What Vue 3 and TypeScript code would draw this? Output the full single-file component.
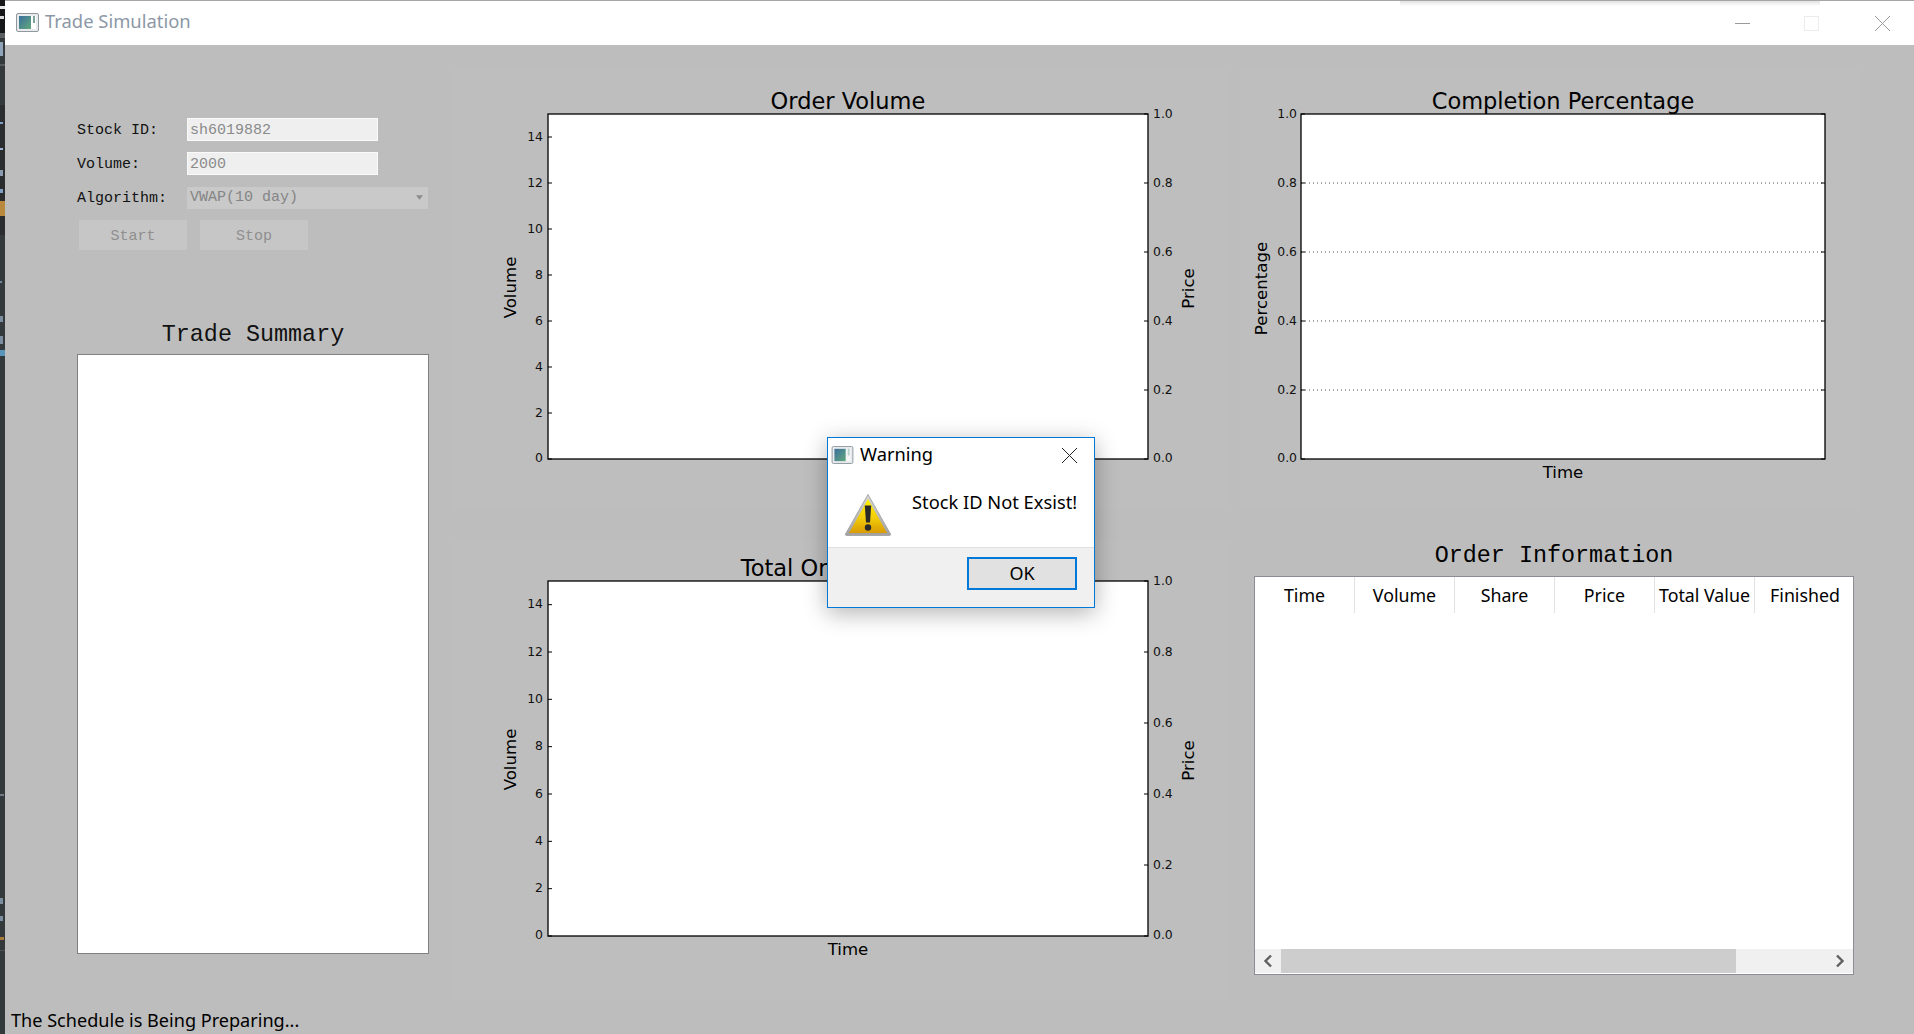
<script setup lang="ts">
interface Chart {
  id: string
  title: string
  titleY: number
  width: number
  height: number
  px: number
  py: number
  pw: number
  ph: number
  timeY: number
}

interface Mark {
  top: number
  height: number
  width: number
  color: string
}

const volumeTicks = [0, 2, 4, 6, 8, 10, 12, 14]
const unitTicks = ['0.0', '0.2', '0.4', '0.6', '0.8', '1.0']

const orderVolume: Chart = {
  id: 'order', title: 'Order Volume', titleY: 39, width: 778, height: 440,
  px: 96, py: 44, pw: 600, ph: 345, timeY: 408,
}
const totalVolume: Chart = {
  id: 'total', title: 'Total Order Volume', titleY: 36, width: 778, height: 460,
  px: 96, py: 41, pw: 600, ph: 355, timeY: 415,
}
const completion: Chart = {
  id: 'completion', title: 'Completion Percentage', titleY: 39, width: 620, height: 440,
  px: 61, py: 44, pw: 524, ph: 345, timeY: 408,
}

const volY = (c: Chart, v: number) => c.py + c.ph - (v / 15) * c.ph
const unitY = (c: Chart, i: number) => c.py + c.ph - (i / 5) * c.ph

const columns = ['Time', 'Volume', 'Share', 'Price', 'Total Value', 'Finished']

const stripMarks: Mark[] = [
  { top: 0, height: 33, width: 5, color: '#151719' },
  { top: 6, height: 3, width: 5, color: '#e6e6e6' },
  { top: 16, height: 3, width: 4, color: '#d8d8d8' },
  { top: 33, height: 5, width: 5, color: '#5d6063' },
  { top: 42, height: 14, width: 3, color: '#8fa4b8' },
  { top: 64, height: 2, width: 5, color: '#55595c' },
  { top: 105, height: 130, width: 5, color: '#2a2c2e' },
  { top: 122, height: 2, width: 3, color: '#7fa0c4' },
  { top: 148, height: 2, width: 3, color: '#9db4d8' },
  { top: 170, height: 6, width: 3, color: '#8c9bb0' },
  { top: 189, height: 4, width: 3, color: '#7fa0c4' },
  { top: 201, height: 15, width: 5, color: '#b98a3e' },
  { top: 281, height: 2, width: 2, color: '#6d88a3' },
  { top: 316, height: 6, width: 3, color: '#7d8da0' },
  { top: 336, height: 8, width: 3, color: '#7d8da0' },
  { top: 350, height: 6, width: 5, color: '#5b94bb' },
  { top: 794, height: 2, width: 4, color: '#6f7a84' },
  { top: 898, height: 6, width: 3, color: '#7d8da0' },
  { top: 916, height: 5, width: 3, color: '#7d8da0' },
  { top: 937, height: 3, width: 4, color: '#a8793a' },
  { top: 950, height: 1, width: 5, color: '#4d5154' },
]
</script>

<template>
  <div class="desktop">
    <div class="strip">
      <span
        v-for="m in stripMarks"
        :key="m.top"
        class="strip-mark"
        :style="{ top: m.top + 'px', height: m.height + 'px', width: m.width + 'px', background: m.color }"
      ></span>
    </div>
    <div class="window">
      <header class="titlebar">
        <svg class="app-icon" viewBox="0 0 23 19" width="23" height="19">
          <rect x="0.5" y="0.5" width="22" height="18" rx="1.5" fill="#e8eaec" stroke="#8d989f" />
          <rect x="3" y="3" width="12" height="13" fill="url(#appGrad)" />
          <rect x="15" y="3" width="5" height="13" fill="#fff" />
          <rect x="17" y="3" width="2" height="7" fill="#7ba39a" />
          <defs>
            <linearGradient id="appGrad" x1="0" y1="0" x2="1" y2="1">
              <stop offset="0" stop-color="#3a6f9c" />
              <stop offset="1" stop-color="#62a97c" />
            </linearGradient>
          </defs>
        </svg>
        <span class="window-title">Trade Simulation</span>
        <div class="window-controls">
          <svg viewBox="0 0 15 15" width="15" height="15" class="ctl-min"><path d="M0 7.5H15" stroke="#9a9a9a" /></svg>
          <svg viewBox="0 0 15 15" width="15" height="15" class="ctl-max"><rect x="0.5" y="0.5" width="14" height="14" fill="none" stroke="#ececec" /></svg>
          <svg viewBox="0 0 15 15" width="15" height="15" class="ctl-close"><path d="M0 0L15 15M15 0L0 15" stroke="#9a9a9a" /></svg>
        </div>
        <span class="top-shadow"></span>
      </header>

      <main class="content">
        <section class="left">
          <div class="form-row">
            <label class="field-label">Stock ID:</label>
            <div class="field-value">sh6019882</div>
          </div>
          <div class="form-row">
            <label class="field-label">Volume:</label>
            <div class="field-value">2000</div>
          </div>
          <div class="form-row">
            <label class="field-label">Algorithm:</label>
            <div class="combo">
              <span>VWAP(10 day)</span>
              <svg viewBox="0 0 8 5" width="7" height="5"><path d="M0 0H8L4 5Z" fill="#8c8c8c" /></svg>
            </div>
          </div>
          <div class="actions">
            <button class="action" disabled>Start</button>
            <button class="action" disabled>Stop</button>
          </div>
          <h2 class="mono-title summary-title">Trade Summary</h2>
          <div class="summary-box"></div>
        </section>

        <section class="middle">
          <svg
            v-for="c in [orderVolume, totalVolume]"
            :key="c.id"
            class="chart"
            :width="c.width"
            :height="c.height"
            :viewBox="`0 0 ${c.width} ${c.height}`"
          >
            <text class="c-title" :x="c.px + c.pw / 2" :y="c.titleY" text-anchor="middle">{{ c.title }}</text>
            <rect :x="c.px" :y="c.py" :width="c.pw" :height="c.ph" fill="#fff" stroke="#000" stroke-width="1.3" />
            <g v-for="v in volumeTicks" :key="v">
              <path :d="`M${c.px} ${volY(c, v)}h4`" stroke="#000" />
              <text class="c-tick" :x="c.px - 5" :y="volY(c, v) + (v === 0 ? 3 : 3.5)" text-anchor="end">{{ v }}</text>
            </g>
            <g v-for="(t, i) in unitTicks" :key="t">
              <path :d="`M${c.px + c.pw} ${unitY(c, i)}h-4`" stroke="#000" />
              <text class="c-tick" :x="c.px + c.pw + 5" :y="unitY(c, i) + (i === 0 ? 3 : 3.5)">{{ t }}</text>
            </g>
            <text class="c-label" :transform="`translate(64 ${c.py + c.ph / 2 + 1}) rotate(-90)`" text-anchor="middle">Volume</text>
            <text class="c-label" :transform="`translate(742 ${c.py + c.ph / 2 + 2}) rotate(-90)`" text-anchor="middle">Price</text>
            <text class="c-label" :x="c.px + c.pw / 2" :y="c.timeY" text-anchor="middle">Time</text>
          </svg>
        </section>

        <section class="right">
          <svg
            class="chart"
            :width="completion.width"
            :height="completion.height"
            :viewBox="`0 0 ${completion.width} ${completion.height}`"
          >
            <text class="c-title" :x="completion.px + completion.pw / 2" :y="completion.titleY" text-anchor="middle">{{ completion.title }}</text>
            <rect :x="completion.px" :y="completion.py" :width="completion.pw" :height="completion.ph" fill="#fff" />
            <g v-for="(t, i) in unitTicks" :key="t">
              <path
                v-if="i > 0 && i < 5"
                :d="`M${completion.px} ${unitY(completion, i)}h${completion.pw}`"
                stroke="#555"
                stroke-dasharray="1 3"
              />
              <path :d="`M${completion.px} ${unitY(completion, i)}h4M${completion.px + completion.pw} ${unitY(completion, i)}h-4`" stroke="#000" />
              <text class="c-tick" :x="completion.px - 4" :y="unitY(completion, i) + (i === 0 ? 3 : 3.5)" text-anchor="end">{{ t }}</text>
            </g>
            <rect :x="completion.px" :y="completion.py" :width="completion.pw" :height="completion.ph" fill="none" stroke="#000" stroke-width="1.3" />
            <text class="c-label" :transform="`translate(27 ${completion.py + completion.ph / 2 + 2}) rotate(-90)`" text-anchor="middle">Percentage</text>
            <text class="c-label" :x="completion.px + completion.pw / 2" :y="completion.timeY" text-anchor="middle">Time</text>
          </svg>

          <h2 class="mono-title order-title">Order Information</h2>
          <div class="table">
            <div class="thead">
              <div v-for="col in columns" :key="col" class="th">{{ col }}</div>
            </div>
            <div class="tbody"></div>
            <div class="hscroll">
              <button class="sb-btn" disabled>
                <svg viewBox="0 0 10 14" width="10" height="14"><path d="M8 1.5L2.5 7L8 12.5" fill="none" stroke="#606060" stroke-width="2.4" /></svg>
              </button>
              <div class="sb-thumb"></div>
              <div class="sb-track"></div>
              <button class="sb-btn" disabled>
                <svg viewBox="0 0 10 14" width="10" height="14"><path d="M2 1.5L7.5 7L2 12.5" fill="none" stroke="#606060" stroke-width="2.4" /></svg>
              </button>
            </div>
          </div>
        </section>
      </main>

      <footer class="status">The Schedule is Being Preparing...</footer>
    </div>

    <div class="dialog">
      <div class="dlg-title">
        <svg viewBox="0 0 23 19" width="23" height="18" class="dlg-app">
          <rect x="0.5" y="0.5" width="22" height="18" rx="1.5" fill="#e8eaec" stroke="#8d989f" />
          <rect x="3" y="3" width="12" height="13" fill="url(#dlgGrad)" />
          <rect x="15" y="3" width="5" height="13" fill="#f6f6f6" />
          <rect x="17" y="3" width="2" height="7" fill="#b9cfc9" />
          <defs>
            <linearGradient id="dlgGrad" x1="0" y1="0" x2="1" y2="1">
              <stop offset="0" stop-color="#3a6f9c" />
              <stop offset="1" stop-color="#62a97c" />
            </linearGradient>
          </defs>
        </svg>
        <span class="dlg-name">Warning</span>
        <svg class="dlg-close" viewBox="0 0 15 15" width="15" height="15"><path d="M0 0L15 15M15 0L0 15" stroke="#222" /></svg>
      </div>
      <div class="dlg-body">
        <svg class="warn" viewBox="0 0 48 44" width="48" height="44">
          <defs>
            <linearGradient id="warnFill" x1="0" y1="0" x2="0" y2="1">
              <stop offset="0" stop-color="#fff200" />
              <stop offset="0.55" stop-color="#f2ce0a" />
              <stop offset="1" stop-color="#d99a04" />
            </linearGradient>
            <linearGradient id="warnEdge" x1="0" y1="0" x2="0" y2="1">
              <stop offset="0" stop-color="#d8d8d8" />
              <stop offset="1" stop-color="#a0a0a0" />
            </linearGradient>
          </defs>
          <path d="M24 1.5L46.5 41Q47 42.5 45 42.5H3Q1 42.5 1.5 41Z" fill="url(#warnEdge)" stroke="#a8a8a8" stroke-linejoin="round" />
          <path d="M24 6L43 40H5Z" fill="url(#warnFill)" />
          <path d="M20.8 12.5H27.2L26 29.5H22Z" fill="#2a2a2a" />
          <circle cx="24" cy="34.5" r="3.2" fill="#2a2a2a" />
        </svg>
        <span class="dlg-text">Stock ID Not Exsist!</span>
      </div>
      <div class="dlg-foot">
        <button class="ok">OK</button>
      </div>
    </div>
  </div>
</template>

<style>
html,
body {
  margin: 0;
  overflow: hidden;
  background: #34393c;
}
</style>

<style scoped>
.desktop {
  position: relative;
  display: flex;
  width: 1914px;
  height: 1034px;
  overflow: hidden;
  font-family: "Noto Sans", sans-serif;
  color: #000;
}

.strip {
  position: relative;
  flex: 0 0 5px;
  background: #34393c;
}
.strip-mark {
  position: absolute;
  left: 0;
}

.window {
  flex: 1;
  display: flex;
  flex-direction: column;
  background: #bdbdbd;
  min-width: 0;
}

.titlebar {
  position: relative;
  flex: 0 0 45px;
  box-sizing: border-box;
  display: flex;
  align-items: center;
  padding: 0 0 2px 11px;
  background: #fff;
  border-top: 1px solid #a6a6a6;
}
.app-icon {
  margin-right: 6px;
}
.window-title {
  font-size: 18.4px;
  line-height: 24px;
  margin-top: -2px;
  color: #8c98a6;
}
.window-controls {
  margin-left: auto;
  display: flex;
  align-items: center;
  padding-top: 2px;
}
.ctl-min {
  margin-right: 54px;
}
.ctl-max {
  margin-right: 56px;
}
.ctl-close {
  margin-right: 24px;
}
.top-shadow {
  position: absolute;
  left: 1395px;
  top: 0;
  width: 420px;
  height: 5px;
  background: linear-gradient(#e2e2e2, #fff);
}

.content {
  flex: 0 0 955px;
  display: grid;
  grid-template-columns: 352px 778px 620px;
  column-gap: 23px;
  padding: 25px 0 0 72px;
  box-sizing: border-box;
}
.right {
  margin-left: -13px;
  display: flex;
  flex-direction: column;
}
.middle {
  display: flex;
  flex-direction: column;
  gap: 30px;
}
.chart {
  display: block;
  background: #bebebe;
}
.c-title {
  font: 22.5px "DejaVu Sans", sans-serif;
  fill: #000;
}
.c-tick {
  font: 12.4px "DejaVu Sans", sans-serif;
  fill: #111;
}
.c-label {
  font: 16.6px "DejaVu Sans", sans-serif;
  fill: #000;
}

.left {
  padding-top: 48px;
  display: flex;
  flex-direction: column;
  color: #111;
}
.form-row {
  display: flex;
  align-items: center;
  height: 23px;
  margin-bottom: 11px;
}
.field-label {
  flex: 0 0 110px;
  padding-top: 2px;
  font: 15px "Liberation Mono", monospace;
}
.field-value {
  box-sizing: border-box;
  width: 191px;
  height: 23px;
  padding: 1px 0 0 2px;
  background: #efefef;
  border: 1px solid #fafafa;
  color: #8a8a8a;
  font: 15px/21px "Liberation Mono", monospace;
}
.combo {
  box-sizing: border-box;
  width: 241px;
  height: 22px;
  padding: 0 5px 0 3px;
  display: flex;
  align-items: center;
  justify-content: space-between;
  background: #c9c9c9;
  color: #858585;
  font: 15px "Liberation Mono", monospace;
}
.actions {
  display: flex;
  gap: 13px;
  padding-left: 2px;
}
.action {
  width: 108px;
  height: 30px;
  padding: 2px 0 0;
  border: 0;
  background: #c6c6c6;
  color: #8f8f8f;
  font: 15px "Liberation Mono", monospace;
}
.mono-title {
  margin: 0;
  font: 400 23.4px/28px "Liberation Mono", monospace;
  text-align: center;
}
.summary-title {
  margin-top: 71px;
  margin-bottom: 5px;
}
.summary-box {
  box-sizing: border-box;
  height: 600px;
  background: #fff;
  border: 1px solid #808080;
}

.order-title {
  margin: 32px 0 0 14px;
  width: 600px;
  height: 34px;
}
.table {
  margin-left: 14px;
  box-sizing: border-box;
  width: 600px;
  height: 399px;
  display: flex;
  flex-direction: column;
  background: #fff;
  border: 1px solid #8c8c94;
}
.thead {
  display: grid;
  grid-template-columns: repeat(6, 100px);
  height: 36px;
}
.th {
  box-sizing: border-box;
  border-right: 1px solid #e2e2e2;
  text-align: center;
  font-size: 17.8px;
  line-height: 36px;
  white-space: nowrap;
}
.th:last-child {
  border-right: 0;
}
.tbody {
  flex: 1;
}
.hscroll {
  flex: 0 0 24px;
  display: flex;
  background: #f0f0f0;
  margin-bottom: 1px;
}
.sb-btn {
  flex: 0 0 26px;
  padding: 0;
  border: 0;
  background: #f0f0f0;
  display: flex;
  align-items: center;
  justify-content: center;
}
.sb-thumb {
  flex: 0 0 455px;
  background: #cdcdcd;
}
.sb-track {
  flex: 1;
}

.status {
  flex: 1;
  padding: 3px 0 0 6px;
  font-size: 18.1px;
  line-height: 34px;
  color: #000;
}

.dialog {
  position: absolute;
  left: 827px;
  top: 437px;
  width: 268px;
  height: 171px;
  box-sizing: border-box;
  display: flex;
  flex-direction: column;
  background: #fff;
  border: 1px solid #0078d7;
  box-shadow: 0 5px 22px rgba(0, 0, 0, 0.3);
}
.dlg-title {
  display: flex;
  align-items: center;
  height: 34px;
  padding: 0 17px 0 3px;
}
.dlg-app {
  margin-right: 6px;
}
.dlg-name {
  font-size: 18.3px;
  line-height: 24px;
  margin-top: -2px;
}
.dlg-close {
  margin-left: auto;
}
.dlg-body {
  flex: 1;
  display: flex;
  align-items: flex-start;
  padding: 21px 0 0 16px;
}
.warn {
  margin-right: 20px;
}
.dlg-text {
  font-size: 18.3px;
  line-height: 24px;
  margin-top: -3px;
  white-space: nowrap;
}
.dlg-foot {
  flex: 0 0 60px;
  box-sizing: border-box;
  display: flex;
  justify-content: flex-end;
  padding: 9px 17px 0 0;
  background: #f0f0f0;
  border-top: 1px solid #dfdfdf;
}
.ok {
  width: 110px;
  height: 33px;
  padding: 0 0 2px;
  background: #e1e1e1;
  border: 2px solid #0078d7;
  font: 18px "Noto Sans", sans-serif;
  color: #000;
}
</style>
